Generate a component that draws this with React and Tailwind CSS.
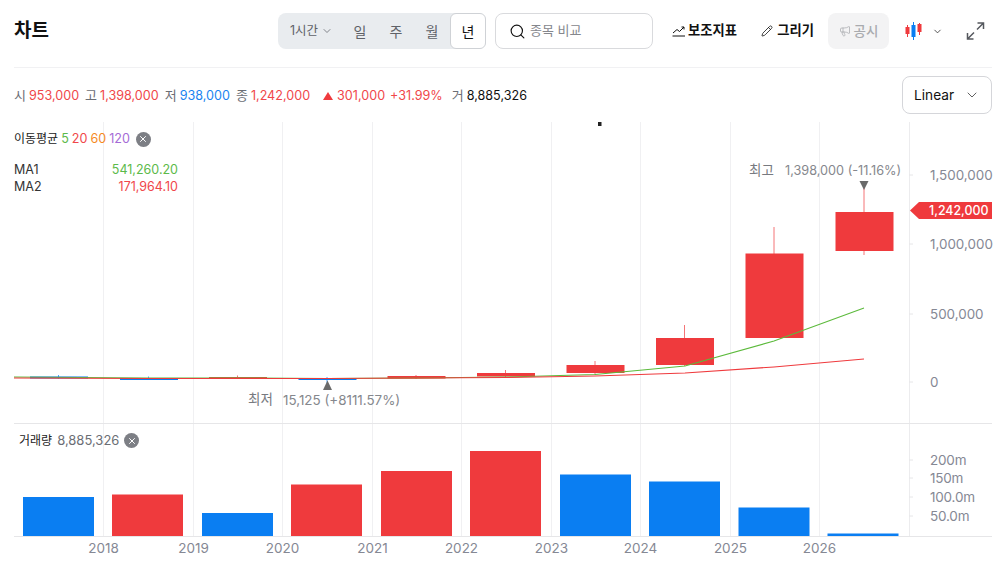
import { ChevronDown, Search, Pencil, Megaphone, X } from 'lucide-react';

const font = { fontFamily: 'Inter, "Noto Sans CJK KR", sans-serif' };
const RED = '#ef3a3d';
const BLUE = '#0a7ef2';

const gridX = [103.5, 193.5, 282.5, 372.5, 461.5, 551.5, 640.5, 730.5, 819.5];
const years = ['2018', '2019', '2020', '2021', '2022', '2023', '2024', '2025', '2026'];

const candles = [
  { x: 30, top: 376.5, bottom: 378.5, wickTop: 375, wickBottom: 378.5, color: BLUE },
  { x: 120, top: 378, bottom: 380, wickTop: 376.5, wickBottom: 380, color: BLUE },
  { x: 209, top: 377, bottom: 378.5, wickTop: 375.5, wickBottom: 379, color: RED },
  { x: 298.5, top: 378, bottom: 380, wickTop: 377, wickBottom: 383, color: BLUE },
  { x: 387.5, top: 376, bottom: 378.5, wickTop: 375, wickBottom: 379, color: RED },
  { x: 477, top: 373, bottom: 376.5, wickTop: 370, wickBottom: 377, color: RED },
  { x: 566.5, top: 365, bottom: 373, wickTop: 361, wickBottom: 375, color: RED },
  { x: 656, top: 338, bottom: 365, wickTop: 325, wickBottom: 366, color: RED },
  { x: 745.5, top: 253.5, bottom: 338, wickTop: 227, wickBottom: 338, color: RED },
  { x: 835.5, top: 212, bottom: 251, wickTop: 182, wickBottom: 255, color: RED },
];

const volumes = [
  { x: 23, top: 497, color: BLUE },
  { x: 112, top: 494.5, color: RED },
  { x: 202, top: 513, color: BLUE },
  { x: 291, top: 484.5, color: RED },
  { x: 381, top: 471, color: RED },
  { x: 470, top: 451, color: RED },
  { x: 560, top: 474.5, color: BLUE },
  { x: 649, top: 481.5, color: BLUE },
  { x: 738.5, top: 507.5, color: BLUE },
  { x: 827.5, top: 533.5, color: BLUE },
];

const priceTicks = [
  { label: '1,500,000', y: 175 },
  { label: '1,000,000', y: 244 },
  { label: '500,000', y: 314 },
  { label: '0', y: 382 },
];

const volumeTicks = [
  { label: '200m', y: 460 },
  { label: '150m', y: 478 },
  { label: '100.0m', y: 497 },
  { label: '50.0m', y: 516 },
];

function CloseDot() {
  return (
    <span className="inline-flex h-[15px] w-[15px] items-center justify-center rounded-full bg-[#7d7f85]">
      <X size={10} color="#fff" strokeWidth={2.4} />
    </span>
  );
}

function Stat({ label, value, color }) {
  return (
    <span className="flex items-center gap-[3px]">
      <span className="text-[13px] text-[#6b6e75]">{label}</span>
      <span style={{ color }}>{value}</span>
    </span>
  );
}

function Chart() {
  return (
    <svg width="1006" height="450" viewBox="0 122 1006 450" className="block" style={font}>
      {gridX.map((x) => (
        <line key={x} x1={x} x2={x} y1="122" y2="536" stroke="#f0f0f2" />
      ))}
      <line x1="909.5" x2="909.5" y1="122" y2="536" stroke="#ececee" />
      <line x1="14" x2="992" y1="423.5" y2="423.5" stroke="#e6e6e8" />
      <line x1="14" x2="992" y1="536.5" y2="536.5" stroke="#e6e6e8" />

      {priceTicks.map((t) => (
        <g key={t.label}>
          <line x1="909" x2="913" y1={t.y} y2={t.y} stroke="#e6e6e8" />
          <text x="930" y={t.y + 5} fontSize="13.4" fill="#858894">{t.label}</text>
        </g>
      ))}
      {volumeTicks.map((t) => (
        <g key={t.label}>
          <line x1="909" x2="913" y1={t.y} y2={t.y} stroke="#e6e6e8" />
          <text x="930" y={t.y + 5} fontSize="13.5" letterSpacing="-0.2" fill="#858894">{t.label}</text>
        </g>
      ))}
      {years.map((y, i) => (
        <text key={y} x={gridX[i]} y="553" fontSize="13.5" fill="#858894" textAnchor="middle">{y}</text>
      ))}

      {candles.map((c) => (
        <g key={c.x}>
          <line x1={c.x + 28.5} x2={c.x + 28.5} y1={c.wickTop} y2={c.wickBottom} stroke={c.color} strokeOpacity="0.7" />
          <rect x={c.x} y={c.top} width="58" height={c.bottom - c.top} fill={c.color} />
        </g>
      ))}

      {volumes.map((v) => (
        <rect key={v.x} x={v.x} y={v.top} width="71" height={536 - v.top} fill={v.color} />
      ))}

      <polyline
        fill="none"
        stroke="#5cba3c"
        strokeWidth="1.1"
        points="14,377 148,378 237,378 327,378.5 416,378 506,377 595,374.5 685,366 774,341 864,308"
      />
      <polyline
        fill="none"
        stroke="#ef3a3d"
        strokeWidth="1.1"
        points="14,378 148,378.5 237,378.5 327,378.5 416,378 506,377.5 595,376 685,373 774,367 864,359"
      />

      <rect x="598" y="122" width="3.5" height="4" fill="#222" />

      <text x="749" y="174.5" fontSize="13.5" fill="#777a80">최고</text>
      <text x="785" y="175" fontSize="12.7" fill="#85878d">1,398,000 (-11.16%)</text>
      <polygon points="859.5,181 868.5,181 864,190" fill="#6a6a6a" />

      <text x="248" y="404" fontSize="13.5" fill="#777a80">최저</text>
      <text x="283" y="405" fontSize="13.4" fill="#85878d">15,125 (+8111.57%)</text>
      <polygon points="327.5,380.5 323,390 332,390" fill="#6a6a6a" />

      <polygon points="910,210.5 919,202 992,202 992,219 919,219" fill={RED} />
      <text x="929" y="215" fontSize="12.4" fill="#fff" fontWeight="500">1,242,000</text>
    </svg>
  );
}

export default function App() {
  return (
    <div className="h-[572px] w-[1006px] overflow-hidden bg-white text-[13px]" style={font}>
      <header className="mx-[14px] flex h-[68px] items-start border-b border-[#f1f1f3] pt-[13px]">
        <h1 className="flex h-9 w-[264px] items-center text-[19px] font-bold text-[#111]">차트</h1>

        <div className="flex h-9 w-[208px] items-center rounded-lg bg-[#e9ecef] text-[#5f6268]">
          <span className="flex w-[64px] items-center gap-[3px] pl-[12px] text-[12.5px]">
            1시간 <ChevronDown size={12} strokeWidth={1.5} />
          </span>
          <span className="w-9 text-center text-[14px]">일</span>
          <span className="w-9 text-center text-[14px]">주</span>
          <span className="w-9 text-center text-[14px]">월</span>
          <span className="flex h-9 w-9 items-center justify-center rounded-md border border-[#cfd2d6] bg-white text-[14px] text-[#111]">년</span>
        </div>

        <div className="ml-[9px] flex h-9 w-[158px] items-center gap-[4px] rounded-lg border border-[#d9dadd] pl-[13px] text-[#85878d]">
          <Search size={17} color="#111" strokeWidth={1.6} />
          <span>종목 비교</span>
        </div>

        <button className="ml-[19px] flex h-9 w-[65px] items-center justify-between text-[13.3px] font-bold text-[#111]">
          <svg width="14" height="12" viewBox="0 0 14 12" fill="none" stroke="#111" strokeWidth="1">
            <path d="M1 8 L5 4.5 L7.5 6.5 L12 2" />
            <path d="M9.5 2 H12 V4.5" />
            <path d="M0.5 11 H13" />
          </svg>
          보조지표
        </button>
        <button className="ml-6 flex h-9 w-[53px] items-center justify-between text-[13.3px] font-bold text-[#111]">
          <Pencil size={12} strokeWidth={1.6} />
          그리기
        </button>
        <button className="ml-[14px] flex h-9 w-[61px] items-center justify-center gap-[3px] rounded-lg bg-[#f3f3f4] text-[13.5px] font-medium text-[#a9abaf]">
          <Megaphone size={12} strokeWidth={1.5} />
          공시
        </button>

        <svg width="17" height="20" viewBox="0 0 17 20" className="ml-4 mt-2">
          <line x1="2.5" x2="2.5" y1="4" y2="16" stroke="#ef3a3d" />
          <rect x="0.5" y="6" width="4" height="7" fill="#ef3a3d" />
          <line x1="8.5" x2="8.5" y1="1" y2="19" stroke="#0a7ef2" />
          <rect x="6.5" y="4" width="4" height="12" fill="#0a7ef2" />
          <line x1="14.5" x2="14.5" y1="2" y2="14" stroke="#ef3a3d" />
          <rect x="12.5" y="3" width="4" height="8" fill="#ef3a3d" />
        </svg>
        <ChevronDown size={11} color="#333" strokeWidth={1.8} className="ml-[10px] mt-[13px]" />
        <svg width="19" height="18" viewBox="0 0 19 18" fill="none" stroke="#55585e" strokeWidth="1.5" className="ml-[23px] mt-[9px]">
          <path d="M11 7.5 L17.5 1 M11.5 1 H17.5 V7" />
          <path d="M8 10.5 L1.5 17 M7.5 17 H1.5 V11" />
        </svg>
      </header>

      <div className="mx-[14px] flex h-[54px] items-center justify-between text-[12.6px]">
        <div className="flex items-center gap-[6px] pt-[2px]">
          <Stat label="시" value="953,000" color="#f0474a" />
          <Stat label="고" value="1,398,000" color="#f0474a" />
          <Stat label="저" value="938,000" color="#1a84f0" />
          <Stat label="종" value="1,242,000" color="#f0474a" />
          <span className="ml-[7px] flex items-center gap-[4px] text-[#f0474a]">
            <span className="h-0 w-0 border-x-[5px] border-b-[8px] border-x-transparent border-b-[#ef3a3d]" />
            301,000
            <span className="ml-[1px]">+31.99%</span>
          </span>
          <span className="ml-[3px]">
            <Stat label="거" value="8,885,326" color="#111" />
          </span>
        </div>
        <div className="flex h-[38px] w-[90px] items-center justify-between rounded-lg border border-[#d5d6da] pl-[11px] pr-[11px] text-[13.7px] text-[#111]">
          Linear
          <ChevronDown size={16} color="#555" strokeWidth={1.4} />
        </div>
      </div>

      <div className="relative">
        <Chart />

        <div className="absolute left-[14px] top-[8px] flex items-center gap-[3px] text-[12px] text-[#222]">
          <span>이동평균</span>
          <span className="flex gap-[3px] text-[12.6px]">
            <span className="text-[#5cba4a]">5</span>
            <span className="text-[#f0474a]">20</span>
            <span className="text-[#f58a1f]">60</span>
            <span className="text-[#a56bd6]">120</span>
          </span>
          <span className="ml-[3px] flex"><CloseDot /></span>
        </div>

        <div className="absolute left-[14px] top-[39px] w-[164px] text-[12.5px] leading-[17px]">
          <div className="flex justify-between">
            <span className="text-[#333]">MA1</span>
            <span className="text-[#5cba4a]">541,260.20</span>
          </div>
          <div className="flex justify-between">
            <span className="text-[#333]">MA2</span>
            <span className="text-[#f0474a]">171,964.10</span>
          </div>
        </div>

        <div className="absolute left-[19px] top-[309px] flex items-center gap-[5px] text-[12px] text-[#222]">
          <span>거래량</span>
          <span className="text-[13px] text-[#6b6e75]">8,885,326</span>
          <CloseDot />
        </div>
      </div>
    </div>
  );
}
